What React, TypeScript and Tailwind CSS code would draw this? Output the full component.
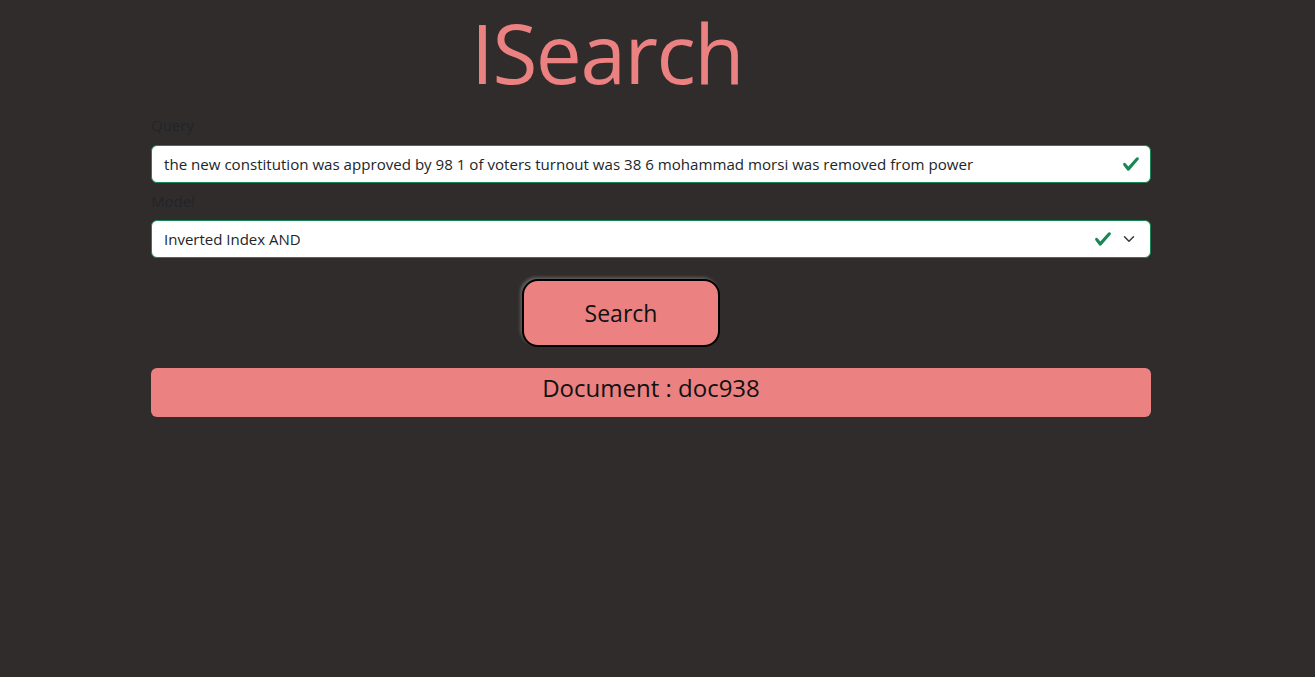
import React from "react"

function Check() {
  return (
    <svg viewBox="0 0 8 8" className="w-[18px] h-[18px]">
      <path
        fill="#198754"
        d="M2.3 6.73.6 4.53c-.4-1.04.46-1.4 1.1-.8l1.1 1.4 3.4-3.8c.6-.63 1.6-.27 1.2.7l-4 4.6c-.43.5-.8.4-1.1.1z"
      />
    </svg>
  )
}

function Chevron() {
  return (
    <svg viewBox="0 0 16 16" className="w-[16px] h-[12px]">
      <path fill="none" stroke="#343a40" strokeLinecap="round" strokeLinejoin="round" strokeWidth="2" d="m2 5 6 6 6-6" />
    </svg>
  )
}

export default function App() {
  return (
    <div
      className="min-h-[677px] bg-[#312c2c] text-[#212529]"
      style={{ fontFamily: '"Open Sans", "Noto Sans", sans-serif' }}
    >
      <div className="w-[1000px] ml-[151px]">
        <h1 className="text-[82px] leading-[104px] text-[#eb8181] ml-[320px] h-[113px] tracking-[-1.5px]">
          ISearch
        </h1>

        <label className="block text-[15px] leading-[24px] mb-[8px]">Query</label>
        <div className="flex items-center h-[38px] bg-white border border-[#198754] rounded-[6px] pl-[12px] pr-[10px]">
          <span className="flex-1 text-[15.1px] text-[#212529] whitespace-nowrap overflow-hidden">
            the new constitution was approved by 98 1 of voters turnout was 38 6 mohammad morsi was removed from power
          </span>
          <Check />
        </div>

        <label className="block text-[15px] leading-[24px] mt-[6px] mb-[7px]">Model</label>
        <div className="flex items-center h-[38px] bg-white border border-[#198754] rounded-[6px] pl-[12px] pr-[13px]">
          <span className="flex-1 text-[15px] text-[#212529]">Inverted Index AND</span>
          <Check />
          <span className="ml-[9px] flex items-center">
            <Chevron />
          </span>
        </div>

        <div className="flex mt-[21px] ml-[371px]">
          <button className="w-[198px] h-[68px] rounded-[16px] bg-[#eb8181] border-2 border-black shadow-[-2px_-2px_3px_rgba(120,120,120,0.6)] text-[23px] text-[#111]">
            Search
          </button>
        </div>

        <div className="mt-[21px] h-[49px] rounded-[6px] bg-[#eb8181] text-center text-[24px] leading-[40px] text-[#111]">
          Document : doc938
        </div>
      </div>
    </div>
  )
}
